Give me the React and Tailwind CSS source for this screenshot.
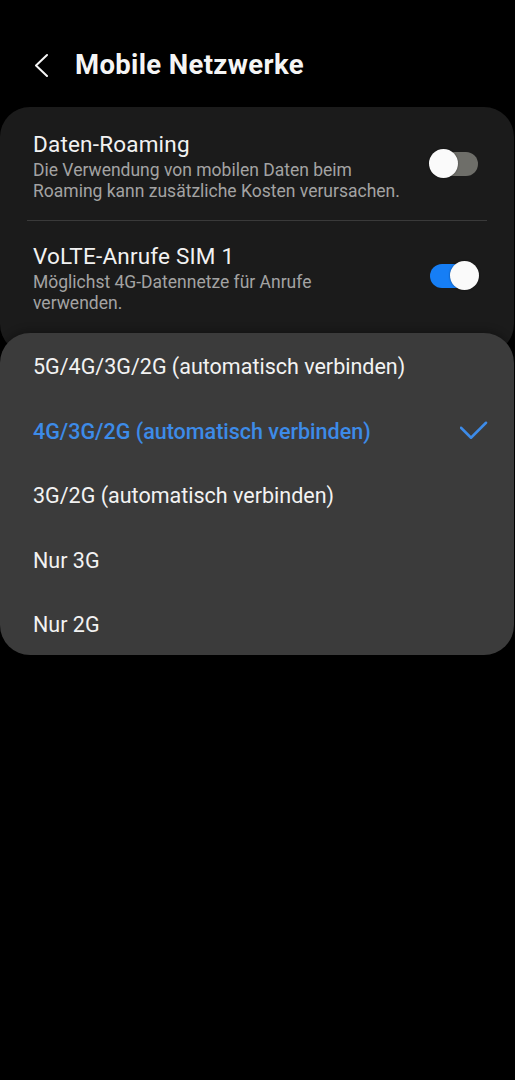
import React, { useState } from "react";

const options = [
  "5G/4G/3G/2G (automatisch verbinden)",
  "4G/3G/2G (automatisch verbinden)",
  "3G/2G (automatisch verbinden)",
  "Nur 3G",
  "Nur 2G",
];

const Toggle = ({ on }) => (
  <div
    className={`relative w-[48px] h-[24px] rounded-full shrink-0 mb-[5px] ${
      on ? "bg-[#167ef5]" : "bg-[#6e6e69]"
    }`}
  >
    <div
      className={`absolute top-[-2.5px] w-[29px] h-[29px] rounded-full bg-[#fafafa] shadow-[0_0_2px_rgba(0,0,0,0.5)] ${
        on ? "right-[-1px]" : "left-[-1px]"
      }`}
    />
  </div>
);

const SettingRow = ({ title, lines, on, className }) => (
  <div className={`flex items-center justify-between pl-[33px] pr-[36px] ${className}`}>
    <div>
      <div className="text-[22.5px] leading-[28px] tracking-[0.2px] text-[#f2f2f2]">{title}</div>
      <div className="mt-[2px] text-[17.5px] leading-[21px] text-[#a3a3a3]">
        {lines.map((l) => (
          <div key={l} className="whitespace-nowrap">
            {l}
          </div>
        ))}
      </div>
    </div>
    <Toggle on={on} />
  </div>
);

const App = () => {
  const [selected, setSelected] = useState(1);

  return (
    <div
      className="relative min-h-[1080px] w-[515px] bg-black"
      style={{ fontFamily: "Roboto, 'Noto Sans', sans-serif" }}
    >
      <div className="flex items-center pt-[49px] pl-[34px]">
        <svg width="16" height="24" viewBox="0 0 16 24" fill="none">
          <path d="M13 2 L2 12.5 L13 23" stroke="#f5f5f5" strokeWidth="2" strokeLinecap="round" strokeLinejoin="round" />
        </svg>
        <h1 className="ml-[25px] text-[27.5px] leading-[32px] tracking-[0.35px] font-bold text-[#f5f5f5]">
          Mobile Netzwerke
        </h1>
      </div>

      <div className="mt-[26px] w-[514px] rounded-[30px] bg-[#1b1b1b] pb-[40px]">
        <SettingRow
          className="pt-[23px] pb-[18px]"
          title="Daten-Roaming"
          lines={["Die Verwendung von mobilen Daten beim", "Roaming kann zusätzliche Kosten verursachen."]}
          on={false}
        />
        <div className="mx-[27px] h-px bg-[#3a3a3a]" />
        <SettingRow
          className="pt-[21px]"
          title="VoLTE-Anrufe SIM 1"
          lines={["Möglichst 4G-Datennetze für Anrufe", "verwenden."]}
          on={true}
        />
      </div>

      <div className="absolute top-[333px] left-0 w-[514px] h-[322px] overflow-hidden rounded-[30px] bg-[#3b3b3b] pt-[2px] shadow-[0_-2px_8px_rgba(0,0,0,0.3)]">
        {options.map((opt, i) => (
          <button
            key={opt}
            onClick={() => setSelected(i)}
            className="flex w-full h-[64.5px] items-center justify-between pl-[33px] pr-[26px] text-left"
          >
            <span
              className={`text-[21.5px] leading-[28px] ${
                selected === i ? "text-[#3d8be8] font-medium" : "text-[#f2f2f2]"
              }`}
            >
              {opt}
            </span>
            {selected === i && (
              <svg width="28" height="22" viewBox="0 0 28 22" fill="none">
                <path d="M1 6.75 L11 16.75 L26 1.75" stroke="#3d8be8" strokeWidth="2.5" strokeLinecap="round" strokeLinejoin="round" />
              </svg>
            )}
          </button>
        ))}
      </div>
    </div>
  );
};

export default App;
